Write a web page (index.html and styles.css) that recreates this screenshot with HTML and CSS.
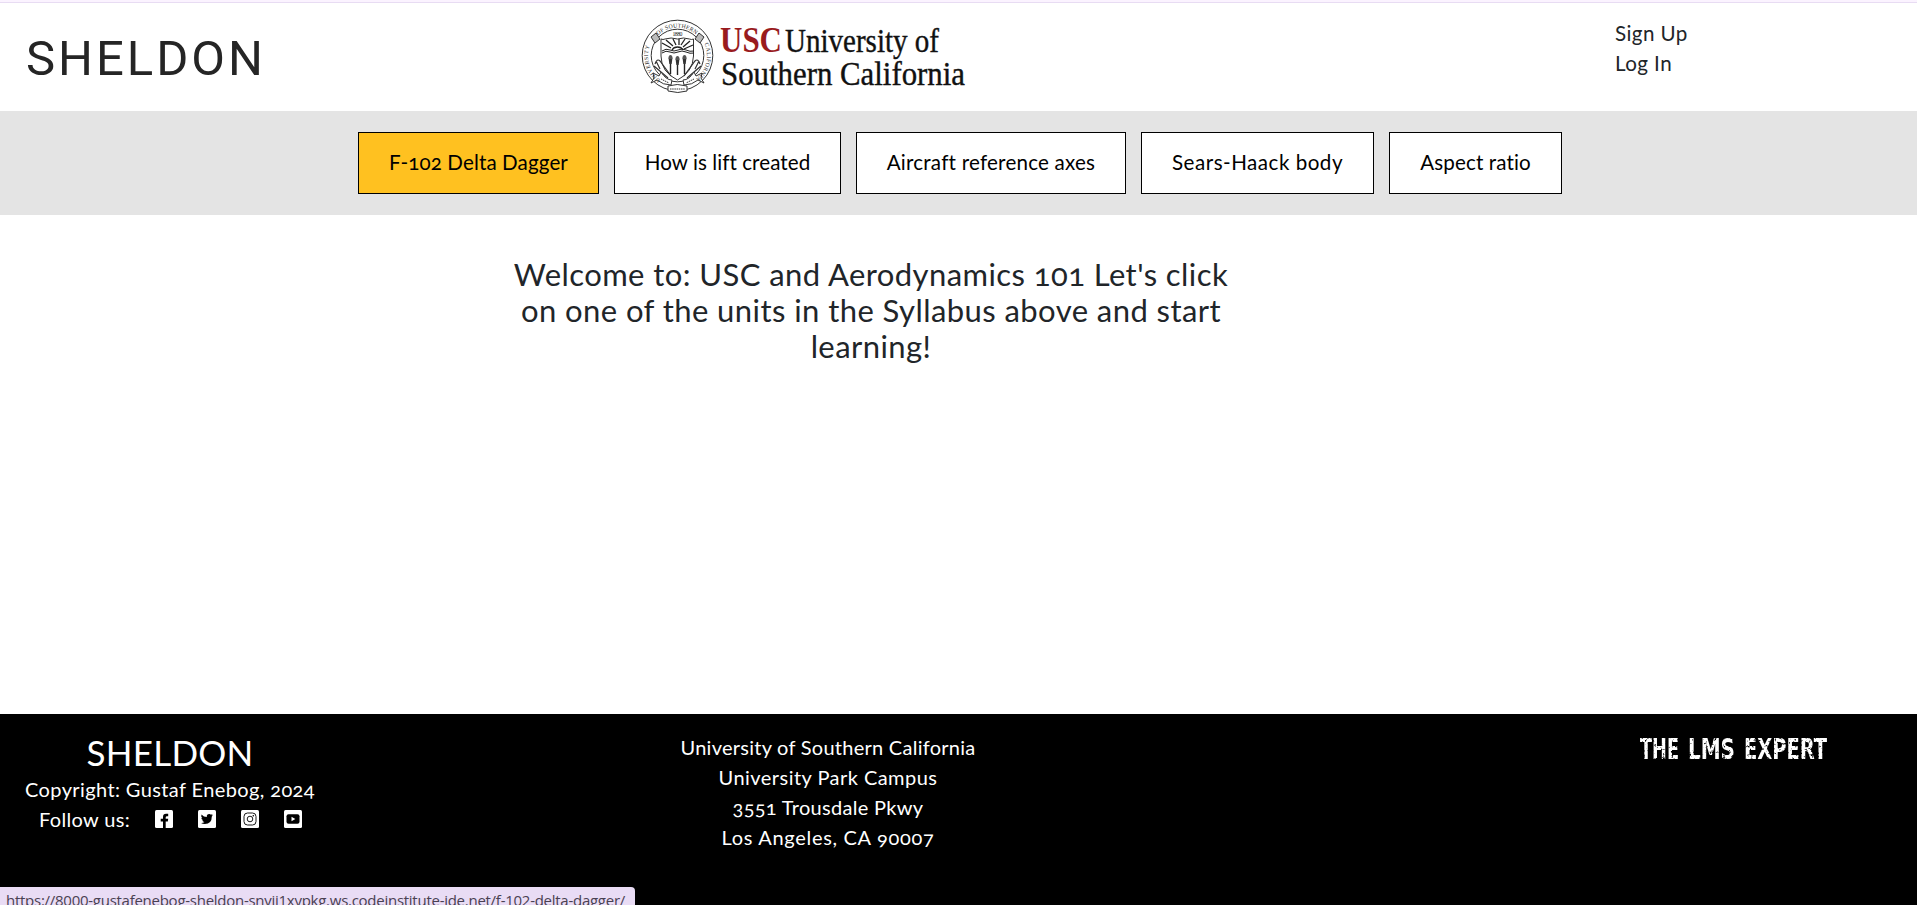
FILE: index.html
```html
<!DOCTYPE html>
<html lang="en">
<head>
<meta charset="utf-8">
<title>Sheldon</title>
<link rel="stylesheet" href="styles.css">
</head>
<body>
<header class="header">
  <svg class="brand" width="270" height="60" viewBox="0 30 270 60"><text x="23" y="74.500" font-size="49" textLength="237">SHELDON</text></svg>
  <svg class="usc" width="330" height="80" viewBox="640 16 330 80">
    <defs>
      <path id="arc-top" d="M657.500 36 A28 28 0 0 1 697.500 36"/>
      <path id="arc-left" d="M664 82 A29.500 29.500 0 0 1 652 41"/>
      <path id="arc-right" d="M703 41 A29.500 29.500 0 0 1 691 82"/>
      <g id="torch"><path d="M-1.8 0H1.8L1.2 5H-1.2Z" fill="#333"/><path d="M-2.2 0Q-2-4 0-4Q2-4 2.2 0Z" fill="#555"/><path d="M0 5V15" stroke="#222" stroke-width="1.4"/></g>
    </defs>
    <g fill="none" stroke="#333" stroke-width="1">
      <circle cx="677.5" cy="55.5" r="35.3"/>
      <circle cx="677.5" cy="55.5" r="26.3"/>
      <path fill="#fff" d="M661 39q2 1 4 0q6-2 12.500 0q6-2 12 0q2 1 4 0V56Q693 72 677.500 80Q661 72 661 56Z"/>
      <path d="M662 53q4-3 8-1t8 0t8 0t8 1M662 51q4-3 8-1t8 0t8 0t8 1" stroke="#222"/>
      <path d="M672 50a6 5 0 0 1 11 0M671 48L662 43M673 46L666 40M676 45L673 39M679 45V39M681 45L685 39M683 47L690 41M684 49L693 45" stroke="#222" stroke-width="1.300"/>
      <path fill="#bbb" d="M651 37l5-4 4 6-5 4zM699 33l5 4-4 6-5-4z"/>
      <path d="M655 64q2-6 5-3l11 15M700 64q-2-6-5-3l-11 15M654 66l14 12M701 66l-14 12M656 61l4 8M699 61l-4 8" stroke-width="1.200"/>
      <path fill="#fff" d="M653 73l6 3 2-4q5 8 11 8l-1 5q-8 0-14-5l-6 3 3-5zM702 73l-6 3-2-4q-5 8-11 8l1 5q8 0 14-5l6 3-3-5z"/>
      <path fill="#fff" d="M668 86q9-3 19 0v5q-9 3-19 0z"/>
      <path d="M670 89h15M661 79l8 4M694 79l-8 4" stroke-dasharray="1.500 .7"/>
    </g>
    <use href="#torch" x="670.500" y="59"/><use href="#torch" x="677.500" y="60"/><use href="#torch" x="684.500" y="59"/>
    <g class="seal-text"><text><textPath href="#arc-top" startOffset="1" textLength="41">OF SOUTHERN</textPath></text>
    <text><textPath href="#arc-left" startOffset="4" textLength="38">UNIVERSITY</textPath></text>
    <text><textPath href="#arc-right" startOffset="3" textLength="39">CALIFORNIA</textPath></text>
    <text x="672.500" y="35.500" textLength="10">1880</text></g>
    <text class="usc-red" x="720" y="52.300" textLength="62" lengthAdjust="spacingAndGlyphs">USC</text>
    <text class="usc-name" x="785" y="52.300" textLength="154" lengthAdjust="spacingAndGlyphs">University of</text>
    <text class="usc-name" x="721" y="84.500" textLength="244" lengthAdjust="spacingAndGlyphs">Southern California</text>
  </svg>
  <div class="account"><a>Sign Up</a><a>Log In</a></div>
</header>
<nav class="units">
  <a class="unit active">F-102 Delta Dagger</a>
  <a class="unit lift">How is lift created</a>
  <a class="unit axes">Aircraft reference axes</a>
  <a class="unit body">Sears-Haack body</a>
  <a class="unit ratio">Aspect ratio</a>
</nav>
<main class="main">
  <h1 class="welcome">Welcome to: USC and Aerodynamics 101 Let's click<br>on one of the units in the Syllabus above and start<br>learning!</h1>
</main>
<footer class="footer">
  <div class="about">
    <h2 class="foot-brand">SHELDON</h2>
    <p class="copyright">Copyright: Gustaf Enebog, 2024</p>
    <div class="follow"><span class="follow-label">Follow us:</span>
      <svg class="social" viewBox="0 0 18 18"><rect width="18" height="18" rx="1.500" fill="#fff"/><path d="M8 18V11.500H5.700V8.700H8V7Q8 3.800 11 3.800H13.200V6.200H12Q10.700 6.200 10.700 7.400V8.700H13.200L12.800 11.500H10.700V18Z"/></svg>
      <svg class="social" viewBox="0 0 18 18"><rect width="18" height="18" rx="1.500" fill="#fff"/><path d="M3.500 4.500Q5.700 7 8.800 7.100Q8.500 4 11.300 4Q12.300 4 13 4.700L14.600 4.100L13.700 5.500L15 5.200L13.800 6.500Q13.800 14 6.800 14Q4.600 14 3 13Q5 13.100 6.500 12Q4.700 11.800 4.200 10.300H5.200Q3.300 9.600 3.300 7.700L4.300 8Q2.600 6.600 3.500 4.500Z"/></svg>
      <svg class="social" viewBox="0 0 18 18"><rect width="18" height="18" rx="1.500" fill="#fff"/><rect x="3" y="3" width="12" height="12" rx="3.500" fill="none" stroke="#000" stroke-width=".9"/><circle cx="9" cy="9" r="2.800" fill="none" stroke="#000" stroke-width=".9"/><circle cx="12.300" cy="5.700" r=".8"/></svg>
      <svg class="social" viewBox="0 0 18 18"><rect width="18" height="18" rx="1.500" fill="#fff"/><rect x="2.500" y="4.300" width="13" height="9.400" rx="2"/><path d="M7.500 6.800V11.200L11.300 9Z" fill="#fff"/></svg>
    </div>
  </div>
  <address class="address"><span class="school">University of Southern California</span><span class="campus">University Park Campus</span><span class="street">3551 Trousdale Pkwy</span><span class="city">Los Angeles, CA 90007</span></address>
  <svg class="expert" width="190" height="36" viewBox="1639 731 190 36">
    <defs><filter id="worn" x="0" y="0" width="1" height="1"><feTurbulence type="fractalNoise" baseFrequency=".35" numOctaves="3" seed="4"/><feColorMatrix values="0 0 0 0 0 0 0 0 0 0 0 0 0 0 0 -5 0 0 0 3.900"/><feComposite in="SourceGraphic" operator="in"/></filter></defs>
    <g filter="url(#worn)"><text x="1640" y="759" textLength="39" lengthAdjust="spacingAndGlyphs">THE</text><text x="1688" y="759" textLength="47" lengthAdjust="spacingAndGlyphs">LMS</text><text x="1744" y="759" textLength="83" lengthAdjust="spacingAndGlyphs">EXPERT</text></g>
  </svg>
</footer>
<div class="status">https://8000-gustafenebog-sheldon-snvji1xypkg.ws.codeinstitute-ide.net/f-102-delta-dagger/</div>
</body>
</html>
```
FILE: styles.css
```css
* { box-sizing: border-box; }
body { margin: 0; height: 905px; overflow: hidden; display: flex; flex-direction: column; position: relative; background: #fff; color: #212529; font: 400 20px/30px Lato, sans-serif; font-variant-numeric: oldstyle-nums; }
p, h1, h2 { margin: 0; }

.header { height: 111px; flex: none; display: flex; border-top: 2px solid #fbf3ff; padding-top: 1px; box-shadow: inset 0 1px #e8dcf3; }
.brand { margin: 27px 0 0 3px; fill: #252525; font-family: Roboto, sans-serif; flex: none; }
.usc { margin: 13px 0 0 367px; flex: none; font-family: "Liberation Serif", serif; }
.usc-red { fill: #991b1e; font-size: 36px; font-weight: bold; }
.usc-name { fill: #111; font-size: 34px; stroke: #111; stroke-width: .4px; }
.seal-text { font-size: 5.8px; fill: #222; }
.account { margin: 15px 0 0 645px; display: flex; flex-direction: column; font-size: 20.6px; letter-spacing: .42px; }

.units { height: 104px; flex: none; background: #e4e4e4; padding: 21px 0 0 358px; display: flex; gap: 15px; }
.unit { height: 62px; width: 241px; padding-bottom: 2px; border: 1px solid #000; background: #fff; color: #000; display: flex; align-items: center; justify-content: center; white-space: nowrap; font-size: 20.6px; letter-spacing: .11px; }
.active { background: #ffc120; }
.lift { width: 227px; letter-spacing: .06px; }
.axes { width: 270px; letter-spacing: .21px; }
.body { width: 233px; letter-spacing: .5px; }
.ratio { width: 173px; letter-spacing: .12px; }

.main { flex: 1; padding: 41px 0 0 490px; }
.welcome { width: 762px; text-align: center; font-size: 31px; line-height: 36px; font-weight: 400; letter-spacing: .43px; white-space: nowrap; }

.footer { height: 191px; flex: none; background: #000; color: #fff; display: flex; padding-top: 18px; }
.about { width: 340px; text-align: center; }
.foot-brand { font-size: 35px; line-height: 40px; padding-bottom: 2px; font-weight: 400; letter-spacing: .25px; }
.copyright { letter-spacing: .39px; }
.follow { display: flex; align-items: center; padding-left: 39px; gap: 25px; }
.follow-label { width: 91px; letter-spacing: .33px; white-space: nowrap; }
.social { width: 18px; height: 18px; }
.address { margin-left: 338px; width: 300px; display: flex; flex-direction: column; align-items: center; font-style: normal; }
.school { letter-spacing: .26px; }
.campus { letter-spacing: .46px; }
.street { letter-spacing: .31px; }
.city { letter-spacing: .69px; }
.expert { margin: -1px 0 0 661px; fill: #fff; font: bold 28px "DejaVu Sans Condensed", sans-serif; }

.status { position: absolute; left: 0; bottom: 0; width: 635px; height: 18px; overflow: hidden; padding: 3px 6px; background: #e9dcf5; color: #494152; border-top-right-radius: 4px; font: 15px/20px "Open Sans", sans-serif; font-variant-numeric: normal; letter-spacing: -.266px; white-space: nowrap; }
```
